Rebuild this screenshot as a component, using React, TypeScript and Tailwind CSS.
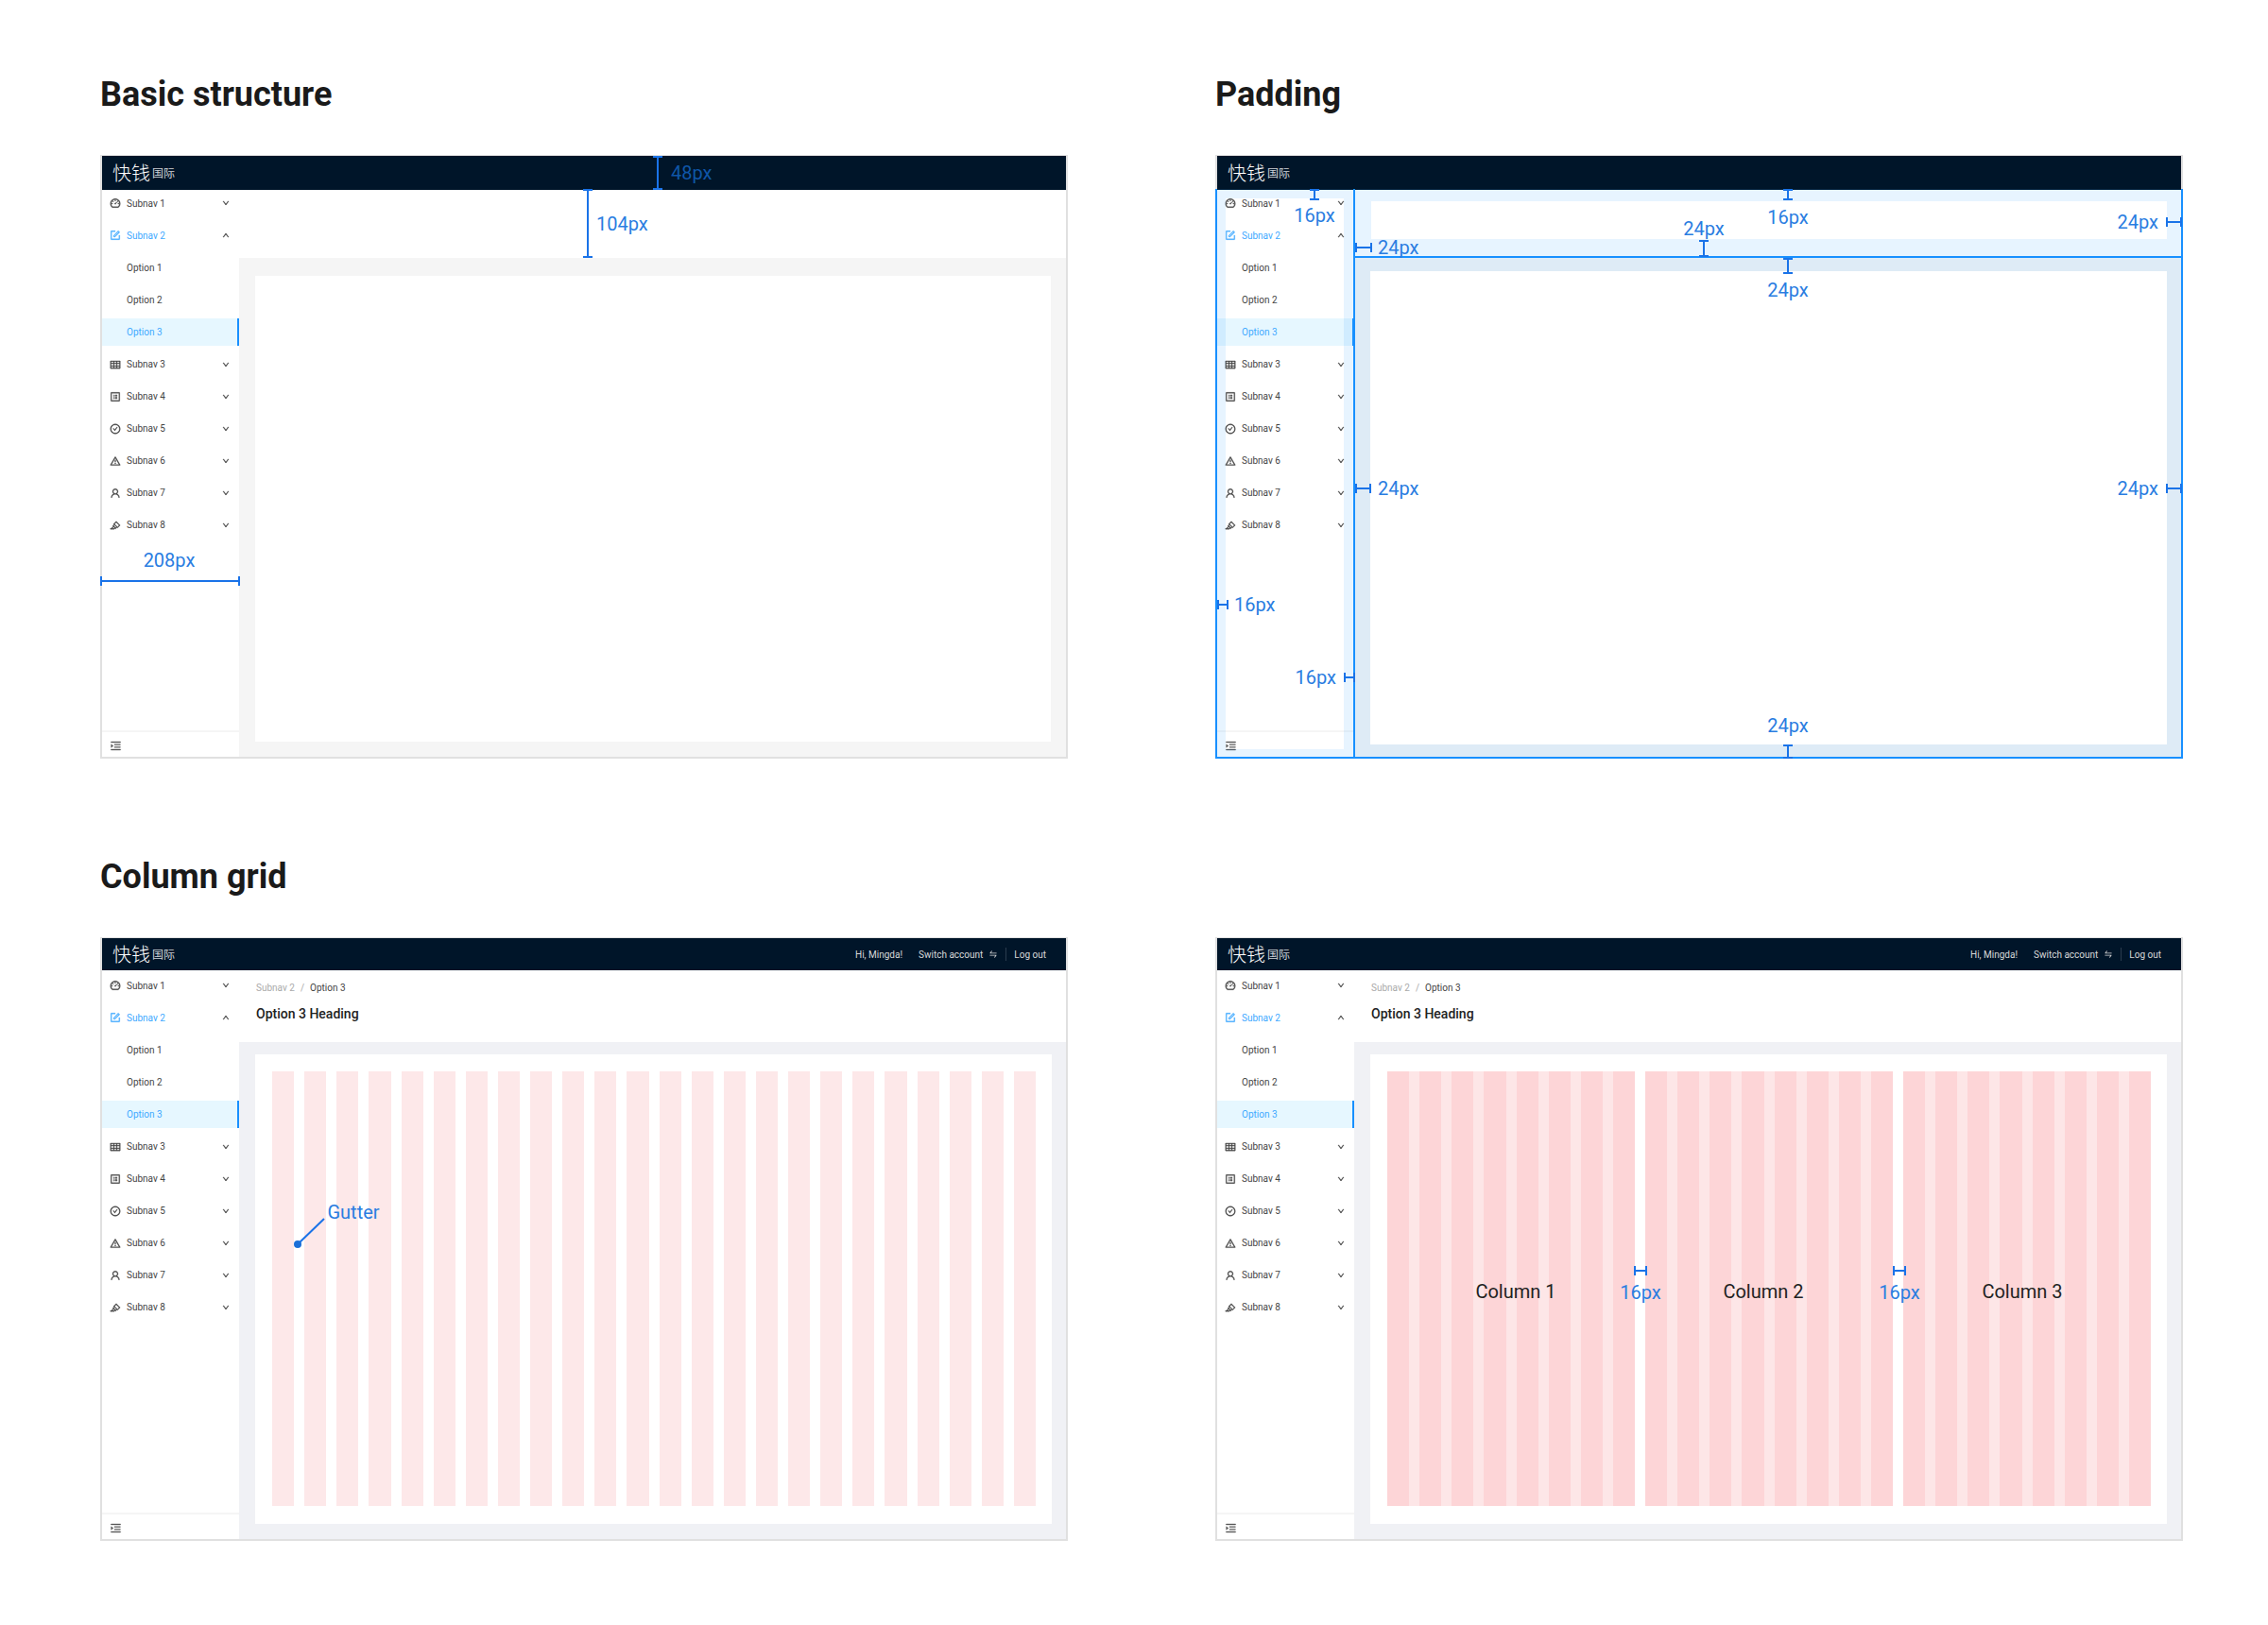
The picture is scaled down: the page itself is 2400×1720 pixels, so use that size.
import { ReactNode } from "react";
import {
  AiOutlineDashboard,
  AiOutlineForm,
  AiOutlineTable,
  AiOutlineProfile,
  AiOutlineCheckCircle,
  AiOutlineWarning,
  AiOutlineUser,
  AiOutlineHighlight,
  AiOutlineMenuUnfold,
  AiOutlineSwap,
  AiOutlineDown,
  AiOutlineUp,
} from "react-icons/ai";

const NAV_BOTTOM = [
  { label: "Subnav 3", Icon: AiOutlineTable },
  { label: "Subnav 4", Icon: AiOutlineProfile },
  { label: "Subnav 5", Icon: AiOutlineCheckCircle },
  { label: "Subnav 6", Icon: AiOutlineWarning },
  { label: "Subnav 7", Icon: AiOutlineUser },
  { label: "Subnav 8", Icon: AiOutlineHighlight },
];

function Sidebar({ tall }: { tall: boolean }) {
  return (
    <aside className="w-[145px] flex flex-col bg-white shrink-0">
      <div className={tall ? "-mt-[3px]" : "-mt-[1px]"}>
        <div className="h-[34.1px] flex items-center pl-[8px] pr-[10px] text-[#444]">
          <AiOutlineDashboard className="w-[12px] h-[12px] text-[#444] stroke-[30]" />
          <span className="ml-[6px] flex-1 text-[10px]">Subnav 1</span>
          <AiOutlineDown className="w-[8px] h-[8px] text-[#444] stroke-[60]" />
        </div>
        <div className="h-[34.1px] flex items-center pl-[8px] pr-[10px] text-[#40a9ff]">
          <AiOutlineForm className="w-[12px] h-[12px] stroke-[30]" />
          <span className="ml-[6px] flex-1 text-[10px]">Subnav 2</span>
          <AiOutlineUp className="w-[8px] h-[8px] text-[#444] stroke-[60]" />
        </div>
        <div className="h-[34.1px] flex items-center pl-[26px] text-[10px] text-[#444]">Option 1</div>
        <div className="h-[34.1px] flex items-center pl-[26px] text-[10px] text-[#444]">Option 2</div>
        <div className="h-[29px] my-[2.55px] flex items-center pl-[26px] text-[10px] text-[#40a9ff] bg-[#e6f7ff] border-r-2 border-[#1890ff]">
          Option 3
        </div>
        {NAV_BOTTOM.map(({ label, Icon }) => (
          <div key={label} className="h-[34.1px] flex items-center pl-[8px] pr-[10px] text-[#444]">
            <Icon className="w-[12px] h-[12px] text-[#444] stroke-[30]" />
            <span className="ml-[6px] flex-1 text-[10px]">{label}</span>
            <AiOutlineDown className="w-[8px] h-[8px] text-[#444] stroke-[60]" />
          </div>
        ))}
      </div>
      <div className="mt-auto h-[28px] border-t-2 border-[#f5f5f5] flex items-center pl-[8px] pt-[2px]">
        <AiOutlineMenuUnfold className="w-[13px] h-[13px] text-[#555] stroke-[30]" />
      </div>
    </aside>
  );
}

function Header({ tall }: { tall: boolean }) {
  return (
    <header
      className={`${tall ? "h-[36px]" : "h-[34px]"} bg-[#001529] flex items-center pl-[11px] pr-[21px] shrink-0`}
    >
      <span className="text-[20px] leading-none text-white font-['Noto_Sans_CJK_SC',sans-serif] font-light">
        快钱
      </span>
      <span className="ml-[2px] text-[12px] leading-none text-[#d0d4d9] font-['Noto_Sans_CJK_SC',sans-serif]">
        国际
      </span>
      {!tall && (
        <div className="ml-auto flex items-center text-[10px] text-[#d9d9d9]">
          <span>Hi, Mingda!</span>
          <span className="ml-[17px]">Switch account</span>
          <AiOutlineSwap className="ml-[6px] w-[10px] h-[10px]" />
          <span className="ml-[8px] w-px h-[14px] bg-[#2a3c4e]" />
          <span className="ml-[8px]">Log out</span>
        </div>
      )}
    </header>
  );
}

function GridBars({ grouped }: { grouped: boolean }) {
  if (!grouped) {
    return (
      <div className="flex-1 flex gap-[11px]">
        {Array.from({ length: 24 }).map((_, i) => (
          <div key={i} className="flex-1 bg-[#fde8e9]" />
        ))}
      </div>
    );
  }
  return (
    <div className="flex-1 flex gap-[11px]">
      {[0, 1, 2].map((col) => (
        <div key={col} className="flex-1 flex gap-[11px] bg-[#fde6e7]">
          {Array.from({ length: 8 }).map((_, i) => (
            <div key={i} className="flex-1 bg-[#fdd5d7]" />
          ))}
        </div>
      ))}
    </div>
  );
}

function Frame({ variant, children }: { variant: "plain" | "bars" | "columns"; children: ReactNode }) {
  const tall = variant === "plain";
  return (
    <div className="relative w-full h-[639px]">
      <div className="h-full flex flex-col border-2 border-t border-[#e0e0e0] bg-white">
        <Header tall={tall} />
        <div className="flex-1 flex min-h-0">
          <Sidebar tall={tall} />
          {tall ? (
            <main className="flex-1 flex flex-col">
              <div className="h-[72px] bg-white shrink-0" />
              <div className="flex-1 flex bg-[#f5f5f5] pt-[19px] pl-[17px] pr-[16px] pb-[16px]">
                <div className="flex-1 bg-white" />
              </div>
            </main>
          ) : (
            <main className="flex-1 flex flex-col">
              <div className="h-[76px] bg-white shrink-0 pl-[18px] pt-[12px]">
                <div className="text-[10px] leading-[14px] text-[#aaa]">
                  Subnav 2<span className="mx-[6px]">/</span>
                  <span className="text-[#444]">Option 3</span>
                </div>
                <div className="mt-[10px] text-[14px] leading-[20px] font-medium text-[#222]">Option 3 Heading</div>
              </div>
              <div className="flex-1 flex bg-[#f0f1f5] pt-[13px] pl-[17px] pr-[15px] pb-[16px]">
                <div className="flex-1 flex bg-white pt-[18px] pb-[19px] pl-[18px] pr-[17px]">
                  <GridBars grouped={variant === "columns"} />
                </div>
              </div>
            </main>
          )}
        </div>
      </div>
      <div className="absolute inset-x-0 top-[1px]">{children}</div>
    </div>
  );
}

// measuring marks drawn over the frames
function VMark({ className }: { className: string }) {
  return (
    <div className={`absolute w-[10px] flex justify-center border-y-2 border-[#1a73e8] ${className}`}>
      <div className="w-[2px] bg-[#1a73e8]" />
    </div>
  );
}

function HMark({ className }: { className: string }) {
  return (
    <div className={`absolute h-[10px] flex items-center border-x-2 border-[#1a73e8] ${className}`}>
      <div className="h-[2px] w-full bg-[#1a73e8]" />
    </div>
  );
}

function Tag({ className, children }: { className: string; children: ReactNode }) {
  return (
    <span className={`absolute whitespace-nowrap text-[20px] leading-none text-[#2a7de1] ${className}`}>
      {children}
    </span>
  );
}

function Title({ children }: { children: ReactNode }) {
  return <h2 className="h-[44px] mb-[42px] text-[36px] leading-[44px] font-bold text-[#1a1a1a]">{children}</h2>;
}

export default function App() {
  return (
    <div className="w-[2400px] h-[1720px] bg-white pl-[106px] pt-[78px] font-['Roboto',sans-serif]">
      <div className="grid grid-cols-[1024px_1024px] gap-x-[156px] gap-y-[103px]">
        <section>
          <Title>Basic structure</Title>
          <Frame variant="plain">
            <VMark className="left-[585px] top-0 h-[36px]" />
            <Tag className="left-[604px] top-[18px] -translate-y-1/2 !text-[#0f56a8]">48px</Tag>
            <VMark className="left-[511px] top-[35px] h-[73px]" />
            <Tag className="left-[525px] top-[72px] -translate-y-1/2">104px</Tag>
            <HMark className="left-0 top-[445px] w-[148px]" />
            <Tag className="left-[73px] top-[428px] -translate-x-1/2 -translate-y-1/2">208px</Tag>
          </Frame>
        </section>

        <section>
          <Title>Padding</Title>
          <Frame variant="plain">
            <div className="absolute left-0 top-[35px] w-[147px] h-[603px] border-x-[11px] border-y-[10px] border-[#1890ff1a]" />
            <div className="absolute left-[147px] top-[35px] w-[877px] h-[72px] bg-white bg-clip-padding border-t-[13px] border-l-[18px] border-r-[17px] border-b-[19px] border-[#1890ff1a]" />
            <div className="absolute left-[147px] top-[107px] w-[877px] h-[531px] bg-white bg-clip-padding border-t-[15px] border-x-[17px] border-b-[15px] border-[#1890ff1a]" />
            <div className="absolute left-0 top-[35px] w-[1024px] h-[603px] border-x-2 border-b-2 border-[#1890ff]" />
            <div className="absolute left-[146px] top-[35px] w-[2px] h-[603px] bg-[#1890ff]" />
            <div className="absolute left-[147px] top-[106px] w-[877px] h-[2px] bg-[#1890ff]" />

            <div className="absolute left-[1px] top-0">
              <VMark className="left-[99px] top-[35px] h-[12px]" />
              <Tag className="left-[104px] top-[63px] -translate-x-1/2 -translate-y-1/2">16px</Tag>
              <HMark className="left-[147px] top-[92px] w-[18px]" />
              <Tag className="left-[171px] top-[97px] -translate-y-1/2">24px</Tag>
              <VMark className="left-[511px] top-[89px] h-[18px]" />
              <Tag className="left-[516px] top-[77px] -translate-x-1/2 -translate-y-1/2">24px</Tag>
              <VMark className="left-[600px] top-[35px] h-[12px]" />
              <Tag className="left-[605px] top-[65px] -translate-x-1/2 -translate-y-1/2">16px</Tag>
              <VMark className="left-[600px] top-[108px] h-[17px]" />
              <Tag className="left-[605px] top-[142px] -translate-x-1/2 -translate-y-1/2">24px</Tag>
              <HMark className="left-[1005px] top-[65px] w-[17px]" />
              <Tag className="left-[997px] top-[70px] -translate-x-full -translate-y-1/2">24px</Tag>
              <HMark className="left-[147px] top-[347px] w-[17px]" />
              <Tag className="left-[171px] top-[352px] -translate-y-1/2">24px</Tag>
              <HMark className="left-[1005px] top-[347px] w-[17px]" />
              <Tag className="left-[997px] top-[352px] -translate-x-full -translate-y-1/2">24px</Tag>
              <HMark className="left-[1px] top-[470px] w-[12px]" />
              <Tag className="left-[19px] top-[475px] -translate-y-1/2">16px</Tag>
              <HMark className="left-[135px] top-[547px] w-[12px]" />
              <Tag className="left-[127px] top-[552px] -translate-x-full -translate-y-1/2">16px</Tag>
              <VMark className="left-[600px] top-[623px] h-[15px]" />
              <Tag className="left-[605px] top-[603px] -translate-x-1/2 -translate-y-1/2">24px</Tag>
            </div>
          </Frame>
        </section>

        <section>
          <Title>Column grid</Title>
          <Frame variant="bars">
            <svg className="absolute left-[200px] top-[290px] w-[50px] h-[40px]" viewBox="0 0 50 40">
              <line x1="9" y1="34" x2="37" y2="7" stroke="#1a73e8" strokeWidth="2" />
              <circle cx="9" cy="34" r="4" fill="#1a6fd8" />
            </svg>
            <Tag className="left-[268px] top-[290px] -translate-x-1/2 -translate-y-1/2">Gutter</Tag>
          </Frame>
        </section>

        <section className="pt-[86px]">
          <Frame variant="columns">
            <div className="absolute left-[1px] top-0">
              <Tag className="left-[317px] top-[374px] -translate-x-1/2 -translate-y-1/2 !text-[#222]">Column 1</Tag>
              <HMark className="left-[442px] top-[347px] w-[14px]" />
              <Tag className="left-[449px] top-[375px] -translate-x-1/2 -translate-y-1/2">16px</Tag>
              <Tag className="left-[579px] top-[374px] -translate-x-1/2 -translate-y-1/2 !text-[#222]">Column 2</Tag>
              <HMark className="left-[716px] top-[347px] w-[14px]" />
              <Tag className="left-[723px] top-[375px] -translate-x-1/2 -translate-y-1/2">16px</Tag>
              <Tag className="left-[853px] top-[374px] -translate-x-1/2 -translate-y-1/2 !text-[#222]">Column 3</Tag>
            </div>
          </Frame>
        </section>
      </div>
    </div>
  );
}
